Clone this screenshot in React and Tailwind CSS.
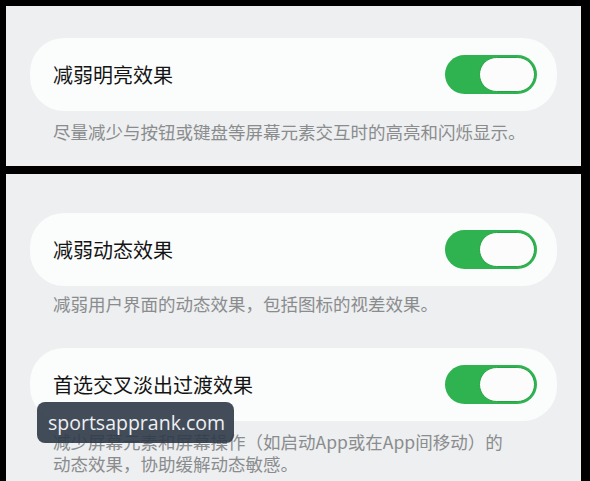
import React from "react";

const cjk = { fontFamily: '"Noto Sans CJK SC", "Noto Sans", sans-serif' };

function Toggle() {
  return (
    <div className="relative w-[92px] h-[39px] rounded-full bg-[#2fb350] shrink-0">
      <div className="absolute right-[2px] top-[2px] w-[56px] h-[35px] rounded-full bg-[#fbfcfb] border border-[#26a445]" />
    </div>
  );
}

function Card({ title }) {
  return (
    <div className="mx-[24px] h-[73px] rounded-[34px] bg-[#fbfcfc] flex items-center justify-between pl-[23px] pr-[20px]">
      <span className="text-[20px] leading-[24px] text-[#141414]">{title}</span>
      <Toggle />
    </div>
  );
}

function Desc({ children, className = "" }) {
  return (
    <div className={"pl-[47px] pr-[10px] text-[17.5px] leading-[22px] text-[#8a8c8e] whitespace-nowrap " + className}>
      {children}
    </div>
  );
}

export default function App() {
  return (
    <div className="relative w-[590px] h-[481px] bg-black overflow-hidden" style={cjk}>
      <div className="flex flex-col pl-[6px] pr-[9px] pt-[6px] gap-[8px] h-full">
        <div className="h-[160px] bg-[#edeff0] pt-[32px]">
          <Card title="减弱明亮效果" />
          <Desc className="mt-[10px]">尽量减少与按钮或键盘等屏幕元素交互时的高亮和闪烁显示。</Desc>
        </div>
        <div className="flex-1 bg-[#edeff0] pt-[39px]">
          <Card title="减弱动态效果" />
          <Desc className="mt-[7px]">减弱用户界面的动态效果，包括图标的视差效果。</Desc>
          <div className="mt-[33px]">
            <Card title="首选交叉淡出过渡效果" />
          </div>
          <Desc className="mt-[10px]">
            减少屏幕元素和屏幕操作（如启动App或在App间移动）的
            <br />
            动态效果，协助缓解动态敏感。
          </Desc>
        </div>
      </div>
      <div
        className="absolute left-[37px] top-[402px] w-[197px] h-[41px] rounded-[8px] bg-[#2f3a48]/90 flex items-center pl-[11px] text-[19.5px] text-[#eef0f2]"
        style={{ fontFamily: '"Open Sans", sans-serif' }}
      >
        sportsapprank.com
      </div>
    </div>
  );
}
